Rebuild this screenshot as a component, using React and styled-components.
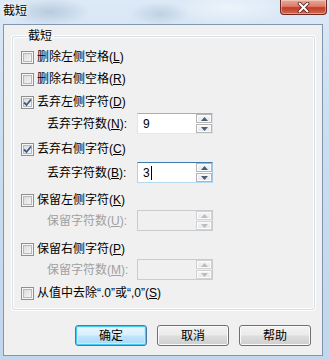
import React from 'react';
import styled, { createGlobalStyle, css } from 'styled-components';

const Global = createGlobalStyle`
  html, body { margin: 0; padding: 0; background: #c6d9ee; }
  body {
    font-family: "Liberation Sans", "Noto Sans CJK SC", "Microsoft YaHei", sans-serif;
    font-size: 12px;
    color: #000;
  }
  * { box-sizing: border-box; }
`;

const Window = styled.div`
  width: 329px;
  height: 360px;
  display: flex;
  flex-direction: column;
  overflow: hidden;
  background:
    radial-gradient(ellipse 40px 14px at 50px 12px, rgba(150,175,200,0.5), transparent),
    radial-gradient(ellipse 30px 12px at 160px 14px, rgba(150,175,200,0.4), transparent),
    radial-gradient(ellipse 60px 16px at 230px 8px, rgba(240,246,252,0.8), transparent),
    linear-gradient(180deg, #dce9f6 0%, #cddff1 30%, #c2d6ec 100%);
`;

const TitleBar = styled.div`
  height: 24px;
  flex: none;
  display: flex;
  align-items: flex-start;
`;

const TitleText = styled.div`
  padding: 4px 0 0 3px;
  line-height: 14px;
  font-size: 12px;
  text-shadow: 0 0 6px #fff, 0 0 3px #fff;
`;

const CloseButton = styled.div`
  margin-left: auto;
  margin-right: 2px;
  width: 47px;
  height: 15px;
  border: 1px solid #6e2a22;
  border-top: none;
  border-radius: 0 0 4px 4px;
  background: linear-gradient(180deg, #eaa797 0%, #de7d69 45%, #c23c28 55%, #d66a50 100%);
  box-shadow: inset 0 0 0 1px rgba(255,255,255,0.35);
  display: flex;
  align-items: center;
  justify-content: center;
`;

const Client = styled.div`
  flex: 1;
  margin: 0 6px 4px 3px;
  border: 1px solid #8196ae;
  background: #f0f0f0;
  display: flex;
  flex-direction: column;
  padding: 4px 7px 0 8px;
`;

const Group = styled.fieldset`
  margin: 0;
  padding: 2px 8px 6px 8px;
  border: 1px solid #d5dfe5;
  border-radius: 3px;
  box-shadow: 0 0 0 1px #fff, inset 0 0 0 1px #fff;
  display: flex;
  flex-direction: column;
`;

const Legend = styled.legend`
  margin-left: 5px;
  padding: 0 2px;
  line-height: 14px;
  font-size: 12px;
`;

const CheckRow = styled.label`
  display: flex;
  align-items: center;
  height: 20px;
  margin-top: ${p => p.$mt || 0}px;
  gap: 3px;
  line-height: 14px;
`;

const Box = styled.span`
  width: 13px;
  height: 13px;
  flex: none;
  border: 1px solid #8e8f8f;
  background: linear-gradient(135deg, #d4d4d4 0%, #eaeaea 55%, #fbfbfb 100%);
  box-shadow: inset 0 0 0 1px #f6f6f6, inset 0 0 0 2px #b9b9b9;
  display: flex;
  align-items: center;
  justify-content: center;
`;

const Label = styled.span`
  color: ${p => (p.$disabled ? '#a0a0a0' : '#000')};
  white-space: nowrap;
  u { text-decoration: underline; text-underline-offset: 1px; }
`;

const InputRow = styled.div`
  display: grid;
  grid-template-columns: 90px 76px;
  align-items: center;
  height: 21px;
  margin-top: ${p => p.$mt || 0}px;
  padding-left: 26px;
  line-height: 14px;
`;

const InputBox = styled.div`
  height: 21px;
  display: flex;
  border: 1px solid ${p => (p.$disabled ? '#c9cccf' : '#abadb3')};
  border-left-color: ${p => (p.$disabled ? '#c9cccf' : '#e2e3ea')};
  border-right-color: ${p => (p.$disabled ? '#c9cccf' : '#dbdfe6')};
  border-bottom-color: ${p => (p.$disabled ? '#c9cccf' : '#e3e9ef')};
  ${p => p.$focus && css`
    border-color: #3d7bad #a4c9e3 #b7d9ed #b5cfe7;
  `}
  background: ${p => (p.$disabled ? '#f0f0f0' : '#fff')};
`;

const Field = styled.div`
  flex: 1;
  padding-left: 5px;
  display: flex;
  align-items: center;
  font-size: 12px;
`;

const Caret = styled.span`
  display: inline-block;
  width: 1px;
  height: 14px;
  background: #000;
  margin-left: 1px;
`;

const Spinner = styled.div`
  width: 16px;
  flex: none;
  display: flex;
  flex-direction: column;
  gap: 1px;
`;

const SpinBtn = styled.div`
  flex: 1;
  border: 1px solid ${p => (p.$disabled ? '#d2d2d2' : '#b4b4b4')};
  background: linear-gradient(180deg, #f7f7f7, #e6e6e6);
  box-shadow: inset 0 0 0 1px #fcfcfc;
  display: flex;
  align-items: center;
  justify-content: center;
`;

const ButtonBar = styled.div`
  display: flex;
  justify-content: flex-end;
  gap: 10px;
  margin-top: 15px;
  padding-right: 4px;
`;

const Button = styled.div`
  width: 72px;
  height: 21px;
  border-radius: 3px;
  display: flex;
  align-items: center;
  justify-content: center;
  font-size: 12px;
  line-height: 14px;
  border: 1px solid #707070;
  background: linear-gradient(180deg, #f2f2f2 0%, #ebebeb 48%, #dddddd 52%, #cfcfcf 100%);
  box-shadow: inset 0 0 0 1px #fbfbfb;
  ${p => p.$default && css`
    border-color: #3c7fb1;
    background: linear-gradient(180deg, #eaf6fd 0%, #d9f0fc 48%, #bee6fd 52%, #a7d9f5 100%);
    box-shadow: inset 0 0 0 1px #48c8f5, inset 0 0 0 2px #c7eafc;
  `}
`;

const Check = () => (
  <svg width="9" height="9" viewBox="0 0 9 9">
    <path d="M1 4.5 L3.5 7 L8 1.5" fill="none" stroke="#3e5b86" strokeWidth="1.8" />
  </svg>
);

const Arrow = ({ up, disabled }) => (
  <svg width="7" height="4" viewBox="0 0 7 4">
    <path d={up ? 'M0 4 L3.5 0 L7 4 Z' : 'M0 0 L3.5 4 L7 0 Z'} fill={disabled ? '#b9bdc4' : '#4d5b78'} />
  </svg>
);

const CheckItem = ({ checked, mt, children }) => (
  <CheckRow $mt={mt}>
    <Box>{checked && <Check />}</Box>
    <Label>{children}</Label>
  </CheckRow>
);

const NumberRow = ({ mt, label, value, disabled, focus }) => (
  <InputRow $mt={mt}>
    <Label $disabled={disabled}>{label}</Label>
    <InputBox $disabled={disabled} $focus={focus}>
      <Field>
        {value}
        {focus && <Caret />}
      </Field>
      <Spinner>
        <SpinBtn $disabled={disabled}><Arrow up disabled={disabled} /></SpinBtn>
        <SpinBtn $disabled={disabled}><Arrow disabled={disabled} /></SpinBtn>
      </Spinner>
    </InputBox>
  </InputRow>
);

export default function App() {
  return (
    <>
      <Global />
      <Window>
        <TitleBar>
          <TitleText>截短</TitleText>
          <CloseButton>
            <svg width="13" height="11" viewBox="0 0 13 11">
              <path d="M2.5 1.5 L10.5 9.5 M10.5 1.5 L2.5 9.5" stroke="#5a1d15" strokeWidth="3.6" strokeLinecap="round" />
              <path d="M2.5 1.5 L10.5 9.5 M10.5 1.5 L2.5 9.5" stroke="#fff" strokeWidth="2" strokeLinecap="round" />
            </svg>
          </CloseButton>
        </TitleBar>
        <Client>
          <Group>
            <Legend>截短</Legend>
            <CheckItem mt={2}>删除左侧空格(<u>L</u>)</CheckItem>
            <CheckItem mt={2}>删除右侧空格(<u>R</u>)</CheckItem>
            <CheckItem mt={3} checked>丢弃左侧字符(<u>D</u>)</CheckItem>
            <NumberRow mt={1} label={<>丢弃字符数(<u>N</u>):</>} value="9" />
            <CheckItem mt={5} checked>丢弃右侧字符(<u>C</u>)</CheckItem>
            <NumberRow mt={3} label={<>丢弃字符数(<u>B</u>):</>} value="3" focus />
            <CheckItem mt={7}>保留左侧字符(<u>K</u>)</CheckItem>
            <NumberRow mt={0} label={<>保留字符数(<u>U</u>):</>} disabled />
            <CheckItem mt={8}>保留右侧字符(<u>P</u>)</CheckItem>
            <NumberRow mt={0} label={<>保留字符数(<u>M</u>):</>} disabled />
            <CheckItem mt={3}>从值中去除“.0”或“,0”(<u>S</u>)</CheckItem>
          </Group>
          <ButtonBar>
            <Button $default>确定</Button>
            <Button>取消</Button>
            <Button>帮助</Button>
          </ButtonBar>
        </Client>
      </Window>
    </>
  );
}
